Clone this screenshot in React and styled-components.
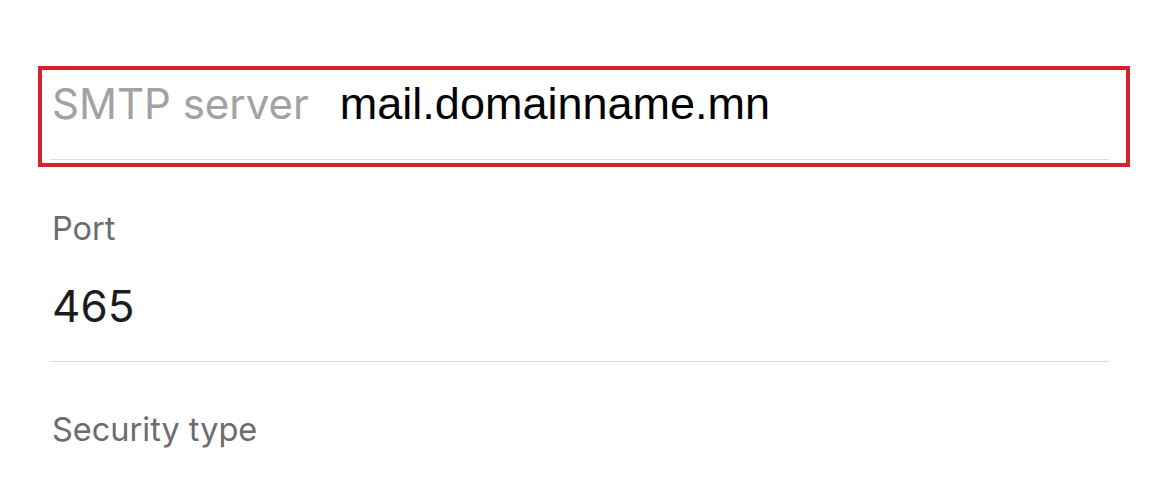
import styled, { createGlobalStyle } from 'styled-components'

const GlobalStyle = createGlobalStyle`
  html, body {
    margin: 0;
    padding: 0;
    background: #ffffff;
  }
  body {
    font-family: Inter, "Liberation Sans", sans-serif;
    -webkit-font-smoothing: antialiased;
  }
`

const Page = styled.div`
  width: 1160px;
  height: 490px;
  overflow: hidden;
  padding-top: 66px;
  box-sizing: border-box;
`

const Highlight = styled.div`
  margin-left: 38px;
  width: 1092px;
  box-sizing: border-box;
  border: 4px solid #d7222c;
  padding: 0 17px 3px 8px;
`

const Row = styled.div`
  display: flex;
  align-items: baseline;
  gap: 31px;
  padding: 6px 0 27px 2px;
`

const InlineLabel = styled.span`
  font-size: 42px;
  line-height: 56px;
  color: #a1a1a6;
`

const InlineValue = styled.span`
  font-family: "Liberation Sans", Arial, sans-serif;
  font-size: 45px;
  line-height: 56px;
  color: #000000;
`

const Divider = styled.div`
  height: 1px;
  background: #dedee2;
`

const Field = styled.div`
  margin: ${p => p.$top}px 51px 0 50px;
  padding-left: 2px;
`

const Label = styled.div`
  font-size: 32.5px;
  line-height: 40px;
  color: #6c6c70;
`

const Value = styled.div`
  margin-top: 29px;
  font-size: 44px;
  line-height: 56px;
  color: #1c1c1e;
  padding-bottom: 27px;
`

const FieldDivider = styled(Divider)`
  margin: 0 51px 0 50px;
`

export default function App() {
  return (
    <>
      <GlobalStyle />
      <Page>
        <Highlight>
          <Row>
            <InlineLabel>SMTP server</InlineLabel>
            <InlineValue>mail.domainname.mn</InlineValue>
          </Row>
          <Divider />
        </Highlight>
        <Field $top={42}>
          <Label>Port</Label>
          <Value>465</Value>
        </Field>
        <FieldDivider />
        <Field $top={48}>
          <Label>Security type</Label>
        </Field>
      </Page>
    </>
  )
}
